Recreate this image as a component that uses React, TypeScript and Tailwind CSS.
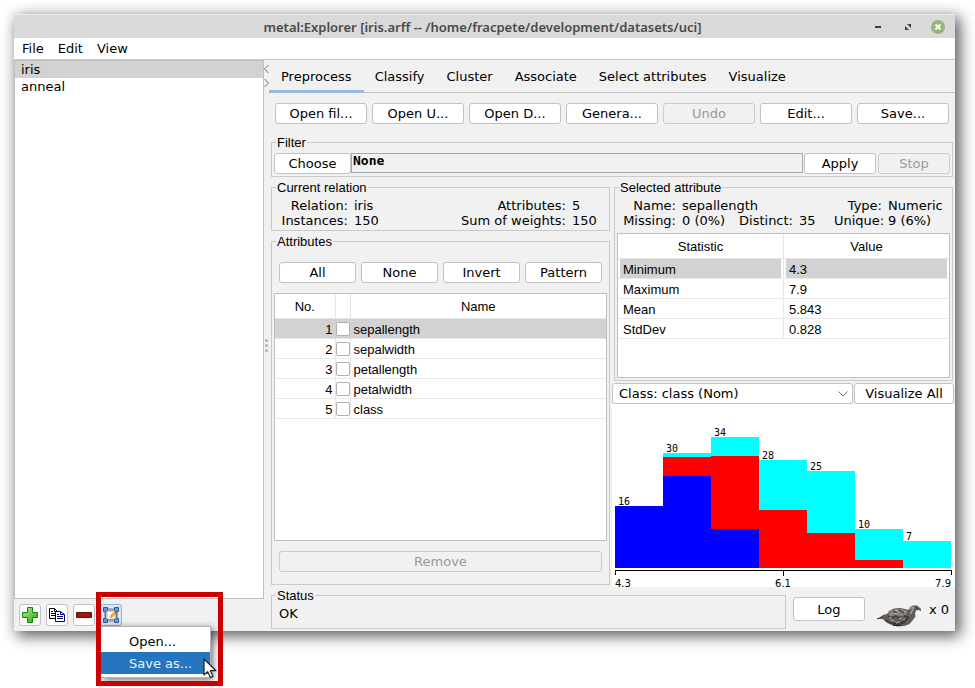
import React from "react";

function Button({
  children,
  className = "",
  height = "h-[21px]",
  disabled = false,
}: {
  children: React.ReactNode;
  className?: string;
  height?: string;
  disabled?: boolean;
}) {
  return (
    <button
      type="button"
      disabled={disabled}
      className={`flex min-w-0 items-center justify-center rounded-[3px] border border-[#c2c2c2] bg-white text-black disabled:border-[#cdcdcd] disabled:bg-[#f1f1f1] disabled:text-[#999999] ${height} ${className}`}
    >
      {children}
    </button>
  );
}

function Group({
  title,
  className = "",
  bodyClassName = "",
  children,
}: {
  title: string;
  className?: string;
  bodyClassName?: string;
  children: React.ReactNode;
}) {
  return (
    <fieldset className={`min-w-0 border border-[#cacaca] ${className}`}>
      <legend className="ml-1 px-px font-['Liberation_Sans',Arial,sans-serif] text-[13px] leading-[15px]">{title}</legend>
      <div className={bodyClassName}>{children}</div>
    </fieldset>
  );
}

function TitleBar() {
  return (
    <header className="flex h-6 items-center border-t border-[#ececec] bg-[#d9d9d9] pr-[10px] font-['Noto_Sans',sans-serif] text-[#4a4a4a]">
      <h1 className="flex-1 pl-[80px] text-center text-[13px] font-semibold leading-6">
        metal:Explorer [iris.arff -- /home/fracpete/development/datasets/uci]
      </h1>
      <div className="flex items-center gap-4">
        <button type="button" aria-label="Minimize" className="h-4 w-[14px]">
          <svg viewBox="0 0 14 16" className="h-4 w-[14px]"><path d="M4 7h6v2H4z" fill="#3c3c3c" /></svg>
        </button>
        <button type="button" aria-label="Restore" className="h-4 w-[14px]">
          <svg viewBox="0 0 14 16" className="h-4 w-[14px]">
            <path d="M6 5h4v4zM4 7l4 4H4z" fill="#3c3c3c" />
          </svg>
        </button>
        <button type="button" aria-label="Close" className="h-4 w-[14px]">
          <svg viewBox="0 0 14 16" className="h-4 w-[14px]">
            <circle cx="7" cy="8" r="7" fill="#97b575" />
            <path d="M4.5 5.5l5 5m0-5l-5 5" stroke="#fff" strokeWidth="2" />
          </svg>
        </button>
      </div>
    </header>
  );
}

function ToolButton({ label, active = false, children }: { label: string; active?: boolean; children: React.ReactNode }) {
  return (
    <button
      type="button"
      aria-label={label}
      className={`flex h-[22px] w-[22px] items-center justify-center rounded-[3px] border ${active ? "border-[#8db2dc] bg-[#dde8f5]" : "border-[#c2c2c2] bg-white"}`}
    >
      {children}
    </button>
  );
}

function PopupMenu() {
  return (
    <>
      <div
        role="menu"
        className="absolute left-px top-[22px] w-[110px] border border-l-0 border-[#b4b4b4] bg-white py-[3px] shadow-[2px_2px_7px_rgba(0,0,0,0.55)]"
      >
        <button type="button" role="menuitem" className="block h-[22px] w-full pl-7 text-left">Open...</button>
        <button type="button" role="menuitem" className="block h-[22px] w-full bg-[#2675bf] pl-7 text-left text-[#e8f1fa]">Save as...</button>
      </div>
      <div className="pointer-events-none absolute -left-1 -top-3 h-[94px] w-[127px] border-[5px] border-[#cc0000]" />
      <svg viewBox="0 0 14 21" className="absolute left-[103px] top-[54px] h-[21px] w-[14px]">
        <path d="M1 1v16l3.6-3.4 2.8 6 2.6-1.2-2.7-5.7H13z" fill="#fff" stroke="#222" strokeWidth="1.2" strokeLinejoin="round" />
      </svg>
    </>
  );
}

function Sidebar() {
  return (
    <aside className="flex w-[250px] shrink-0 flex-col">
      <ul className="flex-1 border border-[#bfbfbf] bg-white leading-[17px]">
        <li className="bg-[#d2d2d2] pl-[6px]">iris</li>
        <li className="pl-[6px]">anneal</li>
      </ul>
      <div className="flex gap-[5px] p-[5px]">
        <ToolButton label="Add">
          <svg viewBox="0 0 16 16" className="h-4 w-4">
            <defs>
              <linearGradient id="plus" x1="0" y1="0" x2="1" y2="1">
                <stop offset="0" stopColor="#b6ee8e" />
                <stop offset="1" stopColor="#28a510" />
              </linearGradient>
            </defs>
            <path d="M5.500.5h5v5h5v5h-5v5h-5v-5h-5v-5h5z" fill="url(#plus)" stroke="#0c8a0c" />
          </svg>
        </ToolButton>
        <ToolButton label="Copy">
          <svg viewBox="0 0 16 14" className="h-[14px] w-4">
            <path d="M.5.500h5l3 3v7h-8z" fill="#fff" stroke="#000" />
            <path d="M5.500.5v3h3M2 3.500h2M2 5.500h5M2 7.500h5" fill="none" stroke="#000" />
            <path d="M6.500 3.500h5l4 3v7h-9z" fill="#fff" stroke="#00006e" />
            <path d="M11.500 3.500v3h4M8 6.500h2M8 8.500h6M8 10.500h6" fill="none" stroke="#00006e" />
          </svg>
        </ToolButton>
        <ToolButton label="Remove">
          <svg viewBox="0 0 16 6" className="h-[6px] w-4"><path d="M.5.500h15v5H.5z" fill="#a9130c" stroke="#5c1a00" /></svg>
        </ToolButton>
        <div className="relative z-10">
          <ToolButton label="Workspace" active>
            <svg viewBox="0 0 16 16" className="h-4 w-4">
              <path d="M3 1.500h10M3 14.500h10M1.500 3v10M14.500 3v10" stroke="#8fb0dc" />
              <path d="M.5.500h4v4h-4zM11.500.5h4v4h-4zM.5 11.500h4v4h-4zM11.500 11.500h4v4h-4z" fill="#6f97d0" stroke="#2c559c" />
              <rect x="2.500" y="3" width="11" height="10" rx="3" fill="#c3cbb9" stroke="#66756c" />
              <path d="M4.500 4.500h7v7h-7z" fill="#fafaf4" />
              <path d="M7.500 10.500l.7-2.500 3.300-3.300 1.500 1.500L9.700 9.500z" fill="#f3b04a" stroke="#a8671a" strokeWidth=".5" />
              <path d="M11.300 4.800l1-1 1.500 1.500-1 1z" fill="#d42d20" />
            </svg>
          </ToolButton>
          <PopupMenu />
        </div>
      </div>
    </aside>
  );
}

function Splitter() {
  return (
    <div className="flex w-[5px] shrink-0 flex-col items-center pb-[30px] pt-1">
      <svg viewBox="0 0 5 26" className="h-[26px] w-[5px]">
        <path d="M4.500 1L.5 5l4 4M.5 15l4 4-4 4" fill="none" stroke="#707070" />
      </svg>
      <div className="flex flex-1 flex-col items-center justify-center gap-[2px]">
        <i className="h-[3px] w-[3px] rounded-full bg-[#b0b0b0]" />
        <i className="h-[3px] w-[3px] rounded-full bg-[#b0b0b0]" />
        <i className="h-[3px] w-[3px] rounded-full bg-[#b0b0b0]" />
      </div>
    </div>
  );
}

const TABS = ["Preprocess", "Classify", "Cluster", "Associate", "Select attributes", "Visualize"];

function Tabs() {
  return (
    <nav role="tablist" className="flex h-[33px] border-b border-[#c2c2c2]">
      {TABS.map((tab, i) => (
        <button
          key={tab}
          type="button"
          role="tab"
          aria-selected={i === 0}
          className={`-mb-px border-b-[3px] pt-[2px] ${i === 0 ? "border-[#97b9dd] px-3" : "border-transparent px-[11px]"}`}
        >
          {tab}
        </button>
      ))}
    </nav>
  );
}

const ATTRIBUTES = ["sepallength", "sepalwidth", "petallength", "petalwidth", "class"];

function AttributeTable() {
  return (
    <div className="flex-1 border border-[#bfbfbf] bg-white font-['Liberation_Sans',Arial,sans-serif]">
      <table className="w-full table-fixed border-collapse">
        <colgroup>
          <col className="w-[60px]" />
          <col className="w-[15px]" />
          <col />
        </colgroup>
        <thead>
          <tr className="h-6 border-b border-[#e4e4e4]">
            <th className="border-r border-[#e4e4e4] p-0 pt-[2px] font-normal">No.</th>
            <th className="border-r border-[#e4e4e4] p-0" aria-label="Selected" />
            <th className="p-0 pt-[2px] font-normal">Name</th>
          </tr>
        </thead>
        <tbody>
          {ATTRIBUTES.map((name, i) => (
            <tr key={name} className={`h-5 border-b border-[#e8e8e8] ${i === 0 ? "bg-[#d2d2d2]" : ""}`}>
              <td className={`border-r p-0 pr-[2px] pt-[2px] text-right ${i === 0 ? "border-[#d2d2d2]" : "border-[#e8e8e8]"}`}>{i + 1}</td>
              <td className={`border-r p-0 pt-px ${i === 0 ? "border-[#d2d2d2]" : "border-[#e8e8e8]"}`}>
                <input
                  type="checkbox"
                  aria-label={`Select ${name}`}
                  className="relative block h-[14px] w-[14px] appearance-none rounded-[2px] border border-[#b0b0b0] bg-white"
                />
              </td>
              <td className="p-0 pl-[3px] pt-[2px]">{name}</td>
            </tr>
          ))}
        </tbody>
      </table>
    </div>
  );
}

const STATISTICS = [
  ["Minimum", "4.3"],
  ["Maximum", "7.9"],
  ["Mean", "5.843"],
  ["StdDev", "0.828"],
];

function StatisticsTable() {
  return (
    <div className="h-[145px] border border-[#bfbfbf] bg-white font-['Liberation_Sans',Arial,sans-serif]">
      <table className="w-full table-fixed border-collapse">
        <thead>
          <tr className="h-6 border-b border-[#e4e4e4]">
            <th className="border-r border-[#e4e4e4] p-0 pt-[2px] font-normal">Statistic</th>
            <th className="p-0 pt-[2px] font-normal">Value</th>
          </tr>
        </thead>
        <tbody>
          {STATISTICS.map(([name, value], i) => (
            <tr key={name} className="h-5 border-b border-[#e8e8e8]">
              {[name, value].map((text) => (
                <td key={text} className="border-r border-[#e8e8e8] p-0 px-[2px] last:border-r-0">
                  <div className={`h-[19px] pl-[3px] pt-px leading-5 ${i === 0 ? "bg-[#d2d2d2]" : ""}`}>{text}</div>
                </td>
              ))}
            </tr>
          ))}
        </tbody>
      </table>
    </div>
  );
}

/* Bin total and the pixel heights of the blue, red and cyan classes. */
const BINS = [
  { total: 16, blue: 62, red: 0, cyan: 0 },
  { total: 30, blue: 92, red: 19, cyan: 4 },
  { total: 34, blue: 39, red: 73, cyan: 19 },
  { total: 28, blue: 0, red: 58, cyan: 50 },
  { total: 25, blue: 0, red: 35, cyan: 62 },
  { total: 10, blue: 0, red: 8, cyan: 31 },
  { total: 7, blue: 0, red: 0, cyan: 27 },
];

function Histogram() {
  return (
    <svg viewBox="0 0 343 183" className="h-[183px] w-full overflow-visible bg-white font-['DejaVu_Sans_Mono',monospace] text-[10px]">
      <g shapeRendering="crispEdges">
        {BINS.map((bin, i) => (
          <g key={bin.total}>
            <rect x={3 + i * 48} y={164 - bin.blue} width="48" height={bin.blue} fill="#0000ff" />
            <rect x={3 + i * 48} y={164 - bin.blue - bin.red} width="48" height={bin.red} fill="#ff0000" />
            <rect x={3 + i * 48} y={164 - bin.blue - bin.red - bin.cyan} width="48" height={bin.cyan} fill="#00ffff" />
          </g>
        ))}
        <path d="M3.500 171v-4.500h336v4.500M171.500 166.500v5" fill="none" stroke="#000" />
      </g>
      {BINS.map((bin, i) => (
        <text key={bin.total} x={6 + i * 48} y={163 - bin.blue - bin.red - bin.cyan}>{bin.total}</text>
      ))}
      <g className="font-['DejaVu_Sans',sans-serif]">
        <text x="3" y="183">4.3</text>
        <text x="171" y="183" textAnchor="middle">6.1</text>
        <text x="339" y="183" textAnchor="end">7.9</text>
      </g>
    </svg>
  );
}

function CurrentRelation() {
  return (
    <Group title="Current relation" bodyClassName="pb-[2px] pt-[3px]">
      <dl className="grid grid-cols-[76px_1fr_106px_37px] gap-x-[6px] leading-[15px]">
        <dt className="text-right">Relation:</dt>
        <dd>iris</dd>
        <dt className="text-right">Attributes:</dt>
        <dd>5</dd>
        <dt className="text-right">Instances:</dt>
        <dd>150</dd>
        <dt className="whitespace-nowrap text-right">Sum of weights:</dt>
        <dd>150</dd>
      </dl>
    </Group>
  );
}

function SelectedAttribute() {
  return (
    <Group title="Selected attribute" className="mx-[2px]" bodyClassName="px-[2px] pb-[2px] pt-[3px]">
      <dl className="-ml-[2px] grid grid-cols-[61px_1fr_54px_29px_48px_62px] gap-x-[6px] whitespace-nowrap pb-[5px] leading-[15px]">
        <dt className="text-right">Name:</dt>
        <dd className="col-span-3">sepallength</dd>
        <dt className="text-right">Type:</dt>
        <dd>Numeric</dd>
        <dt className="text-right">Missing:</dt>
        <dd>0 (0%)</dd>
        <dt className="text-right">Distinct:</dt>
        <dd>35</dd>
        <dt className="text-right">Unique:</dt>
        <dd>9 (6%)</dd>
      </dl>
      <StatisticsTable />
    </Group>
  );
}

function Bird() {
  return (
    <svg viewBox="0 0 44 22" className="h-[22px] w-11" role="img" aria-label="Weka bird">
      <path d="M0 14l3-1.500L6 10l4-1 2-3 5-2.500 6-.5 5 1 3 1 2-3 3-1.500h4l3 2.500 2 2 1.500 3-4.500-3-3 .5-1 3 .5 3-3 4-3 3.500-5 2-7 .5-6-1.500-5-2.500-3-3-4-1z" fill="#625d5b" />
      <path d="M11 7.500c4-3.500 11-4.500 17-2.500l2 4-5 2-7-1-5 2z" fill="#8b8581" />
      <path d="M8 15c5 4 13 5 20 1l4-4M11 11l4 2 3-2 4 2M16 6l4 2M22 5l5 3M13 18c5 2 10 2 15-.5M27 11l4 1" fill="none" stroke="#3b3736" strokeWidth="1.300" />
      <path d="M32 4.500l2.500-2h2.500l-1.500 2.500-2 4" fill="none" stroke="#aaa5a2" strokeWidth="1.400" />
      <path d="M14 15l4 1M22 14l3-1M19 18l4-1M12 12.500l3 1M18 5l3 1M27 7l3-.5M26 15l2-1M17 9l3-1" stroke="#b0aaa7" />
      <path d="M37 2l2 .5 2 2" fill="none" stroke="#4a4645" strokeWidth="1.200" />
      <path d="M16 20.500h8M0 14l5-2" stroke="#262322" />
    </svg>
  );
}

function StatusBar() {
  return (
    <footer className="flex pl-[2px] pr-[6px]">
      <Group title="Status" className="mb-[2px] flex-1" bodyClassName="pb-[7px] pl-[7px] pt-[3px]">
        <output className="block leading-[15px]">OK</output>
      </Group>
      <div className="flex items-start pl-[7px] pt-[9px]">
        <Button height="h-6" className="w-[72px]">Log</Button>
        <div className="ml-3 pt-2"><Bird /></div>
        <span className="ml-2 leading-[26px]">x 0</span>
      </div>
    </footer>
  );
}

export default function App() {
  return (
    <div className="min-h-screen bg-white pb-[57px] pl-[14px] pr-5 pt-[14px] font-['DejaVu_Sans',Verdana,sans-serif] text-[13px] leading-[15px] text-black">
      <div className="bg-[#f1f1f1] shadow-[4px_4px_14px_1px_rgba(0,0,0,0.65)]">
        <TitleBar />
        <nav className="flex h-[22px] items-center border-b border-[#cacaca] bg-white pl-px">
          <button type="button" className="px-[7px]">File</button>
          <button type="button" className="px-[7px]">Edit</button>
          <button type="button" className="px-[7px]">View</button>
        </nav>
        <div className="flex">
          <Sidebar />
          <Splitter />
          <main className="flex min-w-0 flex-1 flex-col">
            <Tabs />
            <div className="mt-[10px] grid grid-cols-7 gap-[5px] px-[6px]">
              <Button>Open fil...</Button>
              <Button>Open U...</Button>
              <Button>Open D...</Button>
              <Button>Genera...</Button>
              <Button disabled>Undo</Button>
              <Button>Edit...</Button>
              <Button>Save...</Button>
            </div>
            <Group title="Filter" className="mx-[2px] mt-[11px]" bodyClassName="flex px-[2px] pb-[2px] pt-[3px]">
              <Button className="w-[77px]">Choose</Button>
              <button
                type="button"
                className="mr-px flex h-5 flex-1 items-start border border-[#a8a8a8] pl-px text-left font-['DejaVu_Sans_Mono',monospace] font-bold leading-[14px]"
              >
                None
              </button>
              <Button className="mr-[2px] w-[72px]">Apply</Button>
              <Button className="w-[72px]" disabled>Stop</Button>
            </Group>
            <div className="mt-[3px] grid grid-cols-2">
              <div className="mx-[2px] mb-[2px] flex flex-col gap-[3px]">
                <CurrentRelation />
                <Group
                  title="Attributes"
                  className="flex flex-1 flex-col"
                  bodyClassName="flex h-full flex-col gap-[10px] px-[2px] pb-3 pt-[13px]"
                >
                  <div className="grid grid-cols-4 gap-[5px] px-[5px]">
                    <Button>All</Button>
                    <Button>None</Button>
                    <Button>Invert</Button>
                    <Button>Pattern</Button>
                  </div>
                  <AttributeTable />
                  <Button className="mx-[5px]" disabled>Remove</Button>
                </Group>
              </div>
              <div className="flex flex-col">
                <SelectedAttribute />
                <div className="mt-[2px] flex">
                  <div className="relative flex-1">
                    <select
                      aria-label="Class attribute"
                      className="block h-[21px] w-full appearance-none rounded-[3px] border border-[#c2c2c2] bg-white pl-[6px]"
                    >
                      <option>Class: class (Nom)</option>
                    </select>
                    <svg viewBox="0 0 10 6" className="pointer-events-none absolute right-[5px] top-[8px] h-[6px] w-[10px]">
                      <path d="M.5.500L5 5 9.500.5" fill="none" stroke="#707070" />
                    </svg>
                  </div>
                  <Button className="mx-px w-[100px]">Visualize All</Button>
                </div>
                <Histogram />
              </div>
            </div>
            <div className="mt-px"><StatusBar /></div>
          </main>
        </div>
      </div>
    </div>
  );
}
